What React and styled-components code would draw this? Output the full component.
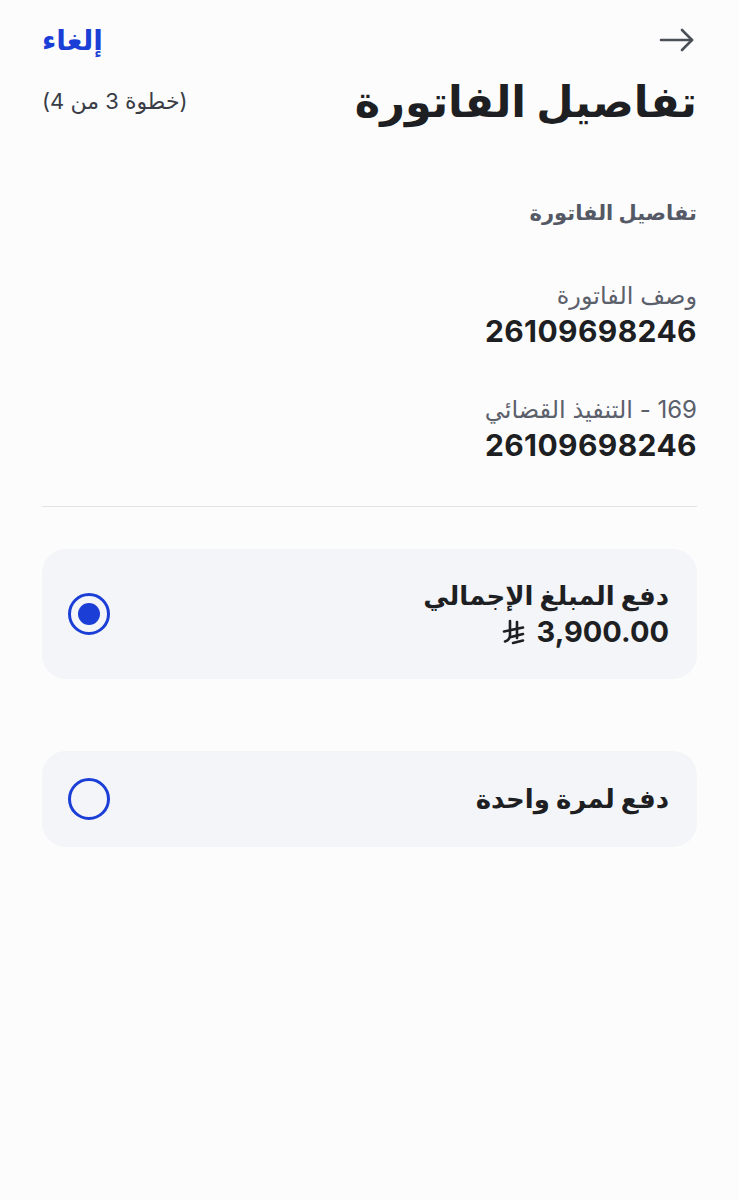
import React from "react";
import styled, { createGlobalStyle } from "styled-components";

const Global = createGlobalStyle`
  html, body { margin: 0; padding: 0; background: #fcfcfd; }
  body { font-family: Inter, "DejaVu Sans", "Noto Sans", sans-serif; color: #1f2024; }
`;

const Page = styled.div`
  direction: rtl;
  width: 739px;
  min-height: 1200px;
  box-sizing: border-box;
  padding: 22px 42px 0 42px;
  background: #fcfcfd;
`;

const TopBar = styled.div`
  display: flex;
  justify-content: space-between;
  align-items: center;
  height: 36px;
`;

const BackButton = styled.button`
  border: 0;
  background: none;
  padding: 0;
  margin-right: 2px;
  display: flex;
  color: #4b4f58;
  cursor: pointer;
`;

const Cancel = styled.button`
  border: 0;
  background: none;
  padding: 0;
  font-family: inherit;
  font-size: 28px;
  font-weight: 700;
  color: #1b3fd6;
  cursor: pointer;
`;

const TitleRow = styled.div`
  display: flex;
  justify-content: space-between;
  align-items: center;
  margin-top: 13px;
`;

const Title = styled.h1`
  margin: 0;
  font-size: 43px;
  font-weight: 700;
  color: #1e1f23;
  line-height: 60px;
`;

const Step = styled.span`
  font-size: 22px;
  color: #3a3d45;
`;

const SectionTitle = styled.h2`
  margin: 68px 0 0 0;
  font-size: 21px;
  font-weight: 600;
  color: #545965;
  line-height: 28px;
`;

const Field = styled.div`
  display: flex;
  flex-direction: column;
  margin-top: ${(p) => p.$mt}px;
`;

const FieldLabel = styled.span`
  font-size: 24px;
  color: #5b606b;
  line-height: 30px;
`;

const FieldValue = styled.span`
  font-size: 30px;
  font-weight: 700;
  color: #1e1f23;
  line-height: 40px;
  letter-spacing: 0.4px;
`;

const Divider = styled.hr`
  border: 0;
  height: 1px;
  background: #e2e3e7;
  margin: 41px 0 0 0;
`;

const Option = styled.label`
  display: flex;
  align-items: center;
  justify-content: space-between;
  box-sizing: border-box;
  background: #f4f5f9;
  border-radius: 24px;
  padding: 0 28px 0 26px;
  height: ${(p) => p.$h}px;
  margin-top: ${(p) => p.$mt}px;
  cursor: pointer;
`;

const OptionText = styled.div`
  display: flex;
  flex-direction: column;
`;

const OptionTitle = styled.span`
  font-size: 26px;
  font-weight: 700;
  color: #1e1f23;
  line-height: 36px;
`;

const Amount = styled.span`
  display: flex;
  align-items: center;
  gap: 11px;
  font-size: 29px;
  font-weight: 700;
  color: #1e1f23;
  line-height: 36px;
  direction: ltr;
  justify-content: flex-end;
`;

const Radio = styled.span`
  width: 42px;
  height: 42px;
  box-sizing: border-box;
  border-radius: 50%;
  border: 3px solid #1b3fd6;
  display: flex;
  align-items: center;
  justify-content: center;
  flex-shrink: 0;
  &::after {
    content: "";
    width: 22px;
    height: 22px;
    border-radius: 50%;
    background: #1b3fd6;
    display: ${(p) => (p.$checked ? "block" : "none")};
  }
`;

const ArrowIcon = () => (
  <svg width="36" height="26" viewBox="0 0 36 26" fill="none" stroke="currentColor" strokeWidth="2.6" strokeLinecap="round" strokeLinejoin="round">
    <path d="M2 13 H33" />
    <path d="M23 3 L33 13 L23 23" />
  </svg>
);

const RiyalIcon = () => (
  <svg width="24" height="26" viewBox="0 0 24 26" fill="none" stroke="#1e1f23" strokeWidth="2.6" strokeLinecap="round">
    <path d="M8 2 V16 Q8 21 3 22.5" />
    <path d="M15 3 V19" />
    <path d="M2 12.5 L21 8.5" />
    <path d="M9 18 L21 15" />
    <path d="M11 24 L21 21.5" />
  </svg>
);

export default function App() {
  return (
    <>
      <Global />
      <Page>
        <TopBar>
          <BackButton aria-label="رجوع">
            <ArrowIcon />
          </BackButton>
          <Cancel>إلغاء</Cancel>
        </TopBar>
        <TitleRow>
          <Title>تفاصيل الفاتورة</Title>
          <Step>(خطوة 3 من 4)</Step>
        </TitleRow>
        <SectionTitle>تفاصيل الفاتورة</SectionTitle>
        <Field $mt={54}>
          <FieldLabel>وصف الفاتورة</FieldLabel>
          <FieldValue>26109698246</FieldValue>
        </Field>
        <Field $mt={44}>
          <FieldLabel>169 - التنفيذ القضائي</FieldLabel>
          <FieldValue>26109698246</FieldValue>
        </Field>
        <Divider />
        <Option $h={130} $mt={42}>
          <OptionText>
            <OptionTitle>دفع المبلغ الإجمالي</OptionTitle>
            <Amount>
              <RiyalIcon />
              3,900.00
            </Amount>
          </OptionText>
          <Radio $checked />
        </Option>
        <Option $h={96} $mt={72}>
          <OptionText>
            <OptionTitle>دفع لمرة واحدة</OptionTitle>
          </OptionText>
          <Radio />
        </Option>
      </Page>
    </>
  );
}
